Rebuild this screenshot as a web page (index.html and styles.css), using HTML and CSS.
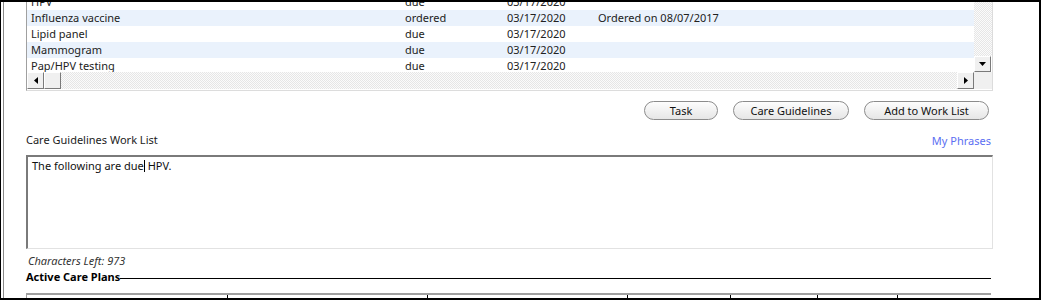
FILE: index.html
```html
<!DOCTYPE html>
<html lang="en">
<head>
    <meta charset="UTF-8">
    <title>Care Guidelines</title>
    <link rel="stylesheet" href="styles.css">
</head>
<body>
    <div class="window">
        <div class="frame">
            <!-- Care guideline grid -->
            <div class="grid">
                <div class="grid-body">
                    <div class="rows">
                        <div class="row"><span>HPV</span><span>due</span><span>03/17/2020</span><span></span></div>
                        <div class="row alt"><span>Influenza vaccine</span><span>ordered</span><span>03/17/2020</span><span>Ordered on 08/07/2017</span></div>
                        <div class="row"><span>Lipid panel</span><span>due</span><span>03/17/2020</span><span></span></div>
                        <div class="row alt"><span>Mammogram</span><span>due</span><span>03/17/2020</span><span></span></div>
                        <div class="row"><span>Pap/HPV testing</span><span>due</span><span>03/17/2020</span><span></span></div>
                    </div>
                    <div class="vscroll">
                        <div class="track"></div>
                        <div class="sbtn">
                            <svg width="7" height="4" viewBox="0 0 7 4"><path d="M0 0H7L3.5 4Z" fill="#000"/></svg>
                        </div>
                    </div>
                </div>
                <div class="hscroll">
                    <div class="sbtn">
                        <svg width="4" height="7" viewBox="0 0 4 7"><path d="M4 0V7L0 3.5Z" fill="#000"/></svg>
                    </div>
                    <div class="sbtn"></div>
                    <div class="track"></div>
                    <div class="sbtn">
                        <svg width="4" height="7" viewBox="0 0 4 7"><path d="M0 0V7L4 3.5Z" fill="#000"/></svg>
                    </div>
                    <div class="corner"></div>
                </div>
            </div>

            <div class="actions">
                <button class="pill pill-task">Task</button>
                <button class="pill pill-guide">Care Guidelines</button>
                <button class="pill pill-add">Add to Work List</button>
            </div>

            <div class="label-row">
                <span>Care Guidelines Work List</span>
                <a class="phrases" href="#">My Phrases</a>
            </div>
            <div class="worklist">The following are due<span class="caret"></span> HPV.</div>
            <div class="chars-left">Characters Left: 973</div>

            <div class="section-title">
                <span>Active Care Plans</span>
                <div class="rule"></div>
            </div>
            <div class="plans">
                <div class="col c1"></div>
                <div class="col c2"></div>
                <div class="col c3"></div>
                <div class="col c4"></div>
                <div class="col c5"></div>
                <div class="col c6"></div>
                <div class="col c7"></div>
            </div>
        </div>
    </div>
</body>
</html>
```

FILE: styles.css
```css
body {
    margin: 0;
    font-family: "Noto Sans", Arial, sans-serif;
    font-size: 11px;
    color: #222;
    background-color: #fff;
}
.window {
    width: 1041px;
    height: 300px;
    box-sizing: border-box;
    border-top: 2px solid #000;
    border-left: 1px solid #000;
    border-right: 2px solid #000;
    border-bottom: 2px solid #000;
    overflow: hidden;
}
.frame {
    height: 100%;
    margin-left: 2px;
    border-left: 1px solid #8a8a8a;
    padding: 0 46px 0 22px;
    display: flex;
    flex-direction: column;
}
.frame > * {
    flex-shrink: 0;
}

/* grid */
.grid {
    border-left: 1px solid #a0a0a0;
    border-right: 1px solid #dcdcdc;
    border-bottom: 1px solid #dcdcdc;
    padding-bottom: 1px;
}
.grid-body {
    display: flex;
    height: 70px;
    overflow: hidden;
}
.rows {
    flex: 1;
    margin-top: -8px;
}
.row {
    display: grid;
    grid-template-columns: 374px 102px 91px 1fr;
    padding-left: 4px;
    height: 16px;
    line-height: 16px;
    white-space: nowrap;
}
.row.alt {
    background-color: #eaf2fc;
}
.vscroll {
    width: 18px;
    display: flex;
    flex-direction: column;
}
.track {
    flex: 1;
    background-color: #f4f4f4;
    background-image: repeating-conic-gradient(#e6e6e6 0 25%, #fbfbfb 0 50%);
    background-size: 2px 2px;
}
.sbtn {
    width: 17px;
    height: 16px;
    flex-shrink: 0;
    box-sizing: border-box;
    background-color: #f0f0f0;
    border-top: 1px solid #fff;
    border-left: 1px solid #fff;
    border-right: 1px solid #7a7a7a;
    border-bottom: 1px solid #7a7a7a;
    display: flex;
    align-items: center;
    justify-content: center;
}
.hscroll {
    display: flex;
    height: 17px;
}
.hscroll .sbtn {
    height: 17px;
}
.corner {
    width: 18px;
    background-color: #f0f0f0;
}

/* buttons */
.actions {
    display: flex;
    justify-content: flex-end;
    gap: 15px;
    margin-top: 10px;
    padding-right: 4px;
}
.pill {
    height: 19px;
    padding: 0;
    font-family: "Noto Sans", Arial, sans-serif;
    font-size: 11px;
    color: #111;
    border: 1px solid #8c8c8c;
    border-radius: 10px;
    background: linear-gradient(#fdfdfd, #e6e6e6);
    line-height: 16px;
}
.pill-task { width: 74px; }
.pill-guide { width: 116px; }
.pill-add { width: 125px; }

/* work list */
.label-row {
    display: flex;
    justify-content: space-between;
    margin-top: 12px;
    line-height: 16px;
    padding-right: 2px;
}
.phrases {
    color: #5b6ef2;
    text-decoration: none;
    margin-top: 1px;
}
.worklist {
    margin-top: 6px;
    height: 94px;
    box-sizing: border-box;
    border-top: 2px solid #7a7a7a;
    border-left: 2px solid #7a7a7a;
    border-right: 1px solid #e2e2e2;
    border-bottom: 1px solid #e2e2e2;
    padding: 1px 4px;
    line-height: 16px;
    color: #111;
}
.caret {
    display: inline-block;
    width: 0;
    height: 12px;
    border-left: 1px solid #000;
    vertical-align: -2px;
}
.chars-left {
    margin-top: 4px;
    padding-left: 2px;
    font-style: italic;
    color: #333;
    line-height: 16px;
}
.section-title {
    display: flex;
    align-items: center;
    line-height: 16px;
    font-weight: bold;
    color: #000;
}
.rule {
    flex: 1;
    border-top: 1px solid #000;
    margin-top: 3px;
    margin-right: 2px;
}

/* care plans header */
.plans {
    margin-top: 8px;
    display: flex;
    height: 6px;
    border-top: 2px solid #a0a0a0;
    border-left: 1px solid #a0a0a0;
    margin-right: 2px;
}
.col {
    border-left: 1px solid #000;
}
.col.c1 { width: 200px; border-left: none; }
.col.c2 { width: 199px; }
.col.c3 { width: 199px; }
.col.c4 { width: 102px; }
.col.c5 { width: 86px; }
.col.c6 { width: 79px; }
.col.c7 { flex: 1; }
```
